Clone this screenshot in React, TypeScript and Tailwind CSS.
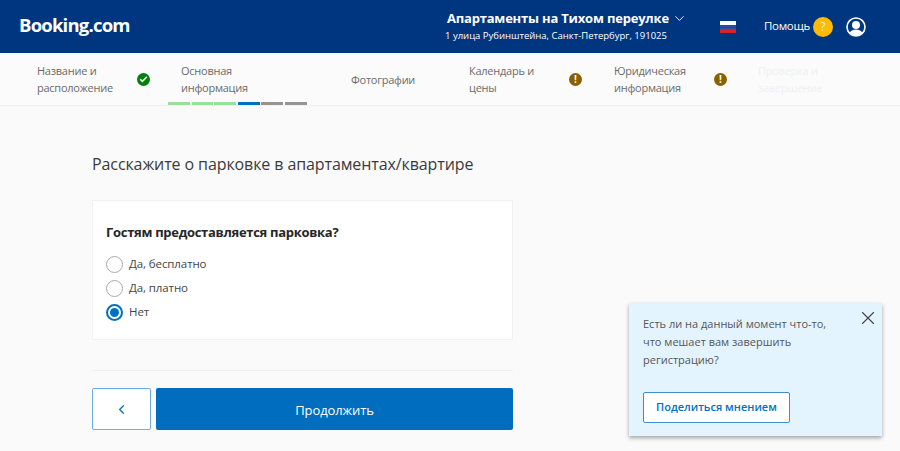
import { X, ChevronLeft, ChevronDown, Check } from "lucide-react";

const font = "font-['Open_Sans','Noto_Sans',sans-serif]";

function Alert() {
  return (
    <span className="flex h-[13px] w-[13px] items-center justify-center rounded-full bg-[#8a6000] text-[10px] leading-none font-bold text-white">
      !
    </span>
  );
}

function Done() {
  return (
    <span className="flex h-[13px] w-[13px] items-center justify-center rounded-full bg-[#008009] text-white">
      <Check size={9} strokeWidth={4} />
    </span>
  );
}

function Step({ lines, width, icon, faded }: { lines: string[]; width: string; icon?: React.ReactNode; faded?: boolean }) {
  return (
    <div className={`flex h-full items-center ${width}`}>
      <p className={`w-[100px] text-[11px] leading-[17px] tracking-[-0.25px] ${faded ? "text-[#f0f0f0]" : "text-[#6b6b6b]"}`}>
        {lines.map((l) => (
          <span key={l} className="block whitespace-nowrap">
            {l}
          </span>
        ))}
      </p>
      {icon}
    </div>
  );
}

function Radio({ label, checked }: { label: string; checked?: boolean }) {
  return (
    <div className="flex h-6 items-center gap-[6px]">
      {checked ? (
        <span className="flex h-[17px] w-[17px] items-center justify-center rounded-full border-2 border-[#0071c2] bg-white">
          <span className="h-[9px] w-[9px] rounded-full bg-[#0071c2]" />
        </span>
      ) : (
        <span className="h-[17px] w-[17px] rounded-full border border-[#a9a9a9] bg-white" />
      )}
      <span className="text-[11.5px] tracking-[-0.1px] text-[#444]">{label}</span>
    </div>
  );
}

export default function App() {
  return (
    <div className={`relative h-[451px] w-[900px] overflow-hidden bg-[#fafafa] ${font}`}>
      <header className="flex h-[53px] items-center bg-[#003580] text-white">
        <div className="mb-[3px] ml-[19px] w-[428px] text-[18.5px] leading-none font-bold tracking-[-0.8px]">Booking.com</div>
        <div className="w-[273px]">
          <div className="flex items-center gap-[3px] text-[13px] leading-[17px] font-bold tracking-[-0.2px]">
            Апартаменты на Тихом переулке
            <ChevronDown size={15} strokeWidth={1.5} />
          </div>
          <div className="-ml-[2px] text-[9.5px] leading-[17px]">1 улица Рубинштейна, Санкт-Петербург, 191025</div>
        </div>
        <div className="flex h-[12px] w-[16px] flex-col overflow-hidden">
          <div className="flex-1 bg-white" />
          <div className="flex-1 bg-[#2a4aa8]" />
          <div className="flex-1 bg-[#d8232a]" />
        </div>
        <div className="mb-[2px] ml-[28px] text-[11.5px] tracking-[-0.3px]">Помощь</div>
        <div className="ml-[3px] flex h-5 w-5 items-center justify-center rounded-full bg-[#febb02] text-[12px] text-[#fff3c4]">?</div>
        <svg className="ml-[13px]" width="20" height="20" viewBox="0 0 20 20">
          <circle cx="10" cy="10" r="9" fill="#003580" stroke="#fff" strokeWidth="1.6" />
          <circle cx="10" cy="8" r="4" fill="#fff" />
          <path d="M3.5 16c1.5-2.8 4-3.6 6.5-3.6s5 .8 6.5 3.6a9 9 0 0 1-13 0z" fill="#fff" />
        </svg>
      </header>

      <nav className="relative flex h-[53px] border-b border-[#f0f0f0] bg-[#fbfbfb] pl-[37px]">
        <Step lines={["Название и", "расположение"]} width="w-[144px]" icon={<Done />} />
        <Step lines={["Основная", "информация"]} width="w-[170px]" />
        <Step lines={["Фотографии"]} width="w-[118px]" />
        <Step lines={["Календарь и", "цены"]} width="w-[145px]" icon={<Alert />} />
        <Step lines={["Юридическая", "информация"]} width="w-[144px]" icon={<Alert />} />
        <Step lines={["Проверка и", "завершение"]} width="w-[100px]" faded />
        <div className="absolute top-[49px] left-[168px] flex gap-[1.5px]">
          <span className="h-[3px] w-[22px] bg-[#97e097]" />
          <span className="h-[3px] w-[21px] bg-[#97e097]" />
          <span className="h-[3px] w-[22px] bg-[#97e097]" />
          <span className="h-[3px] w-[22px] bg-[#0071c2]" />
          <span className="h-[3px] w-[22px] bg-[#949494]" />
          <span className="h-[3px] w-[22px] bg-[#949494]" />
        </div>
      </nav>

      <main className="ml-[92px] w-[421px]">
        <h1 className="mt-[46px] text-[16px] leading-[24px] font-normal tracking-[-0.1px] text-[#3b3b3b]">
          Расскажите о парковке в апартаментах/квартире
        </h1>
        <section className="mt-[24px] h-[140px] border border-[#f1f1f1] bg-white px-[13px] pt-[22px]">
          <h2 className="text-[13px] leading-[18px] font-bold tracking-[-0.3px] text-[#262626]">Гостям предоставляется парковка?</h2>
          <div className="mt-[11px]">
            <Radio label="Да, бесплатно" />
            <Radio label="Да, платно" />
            <Radio label="Нет" checked />
          </div>
        </section>
        <hr className="mt-[30px] border-[#f0f0f0]" />
        <div className="mt-[17px] flex gap-[5px]">
          <button className="flex h-[42px] w-[59px] items-center justify-center rounded-[2px] border border-[#6bace0] bg-white text-[#0071c2]">
            <ChevronLeft size={15} strokeWidth={2} />
          </button>
          <button className="h-[42px] flex-1 rounded-[2px] bg-[#006dbf] pt-[3px] text-[13px] tracking-[-0.1px] text-white">Продолжить</button>
        </div>
      </main>

      <aside className="absolute top-[303px] left-[629px] h-[133px] w-[253px] bg-[#e4f4ff] px-[14px] pt-[12px] shadow-[0_2px_4px_rgba(0,0,0,0.35)]">
        <p className="text-[11px] leading-[18px] text-[#555]">
          Есть ли на данный момент что-то,
          <br />
          что мешает вам завершить
          <br />
          регистрацию?
        </p>
        <X className="absolute top-[4px] right-[3px] text-[#444]" size={22} strokeWidth={1.25} />
        <button className="mt-[23px] h-[31px] w-[147px] rounded-[2px] border border-[#3b8fd0] bg-white text-[11px] font-semibold text-[#0071c2]">
          Поделиться мнением
        </button>
      </aside>
    </div>
  );
}
